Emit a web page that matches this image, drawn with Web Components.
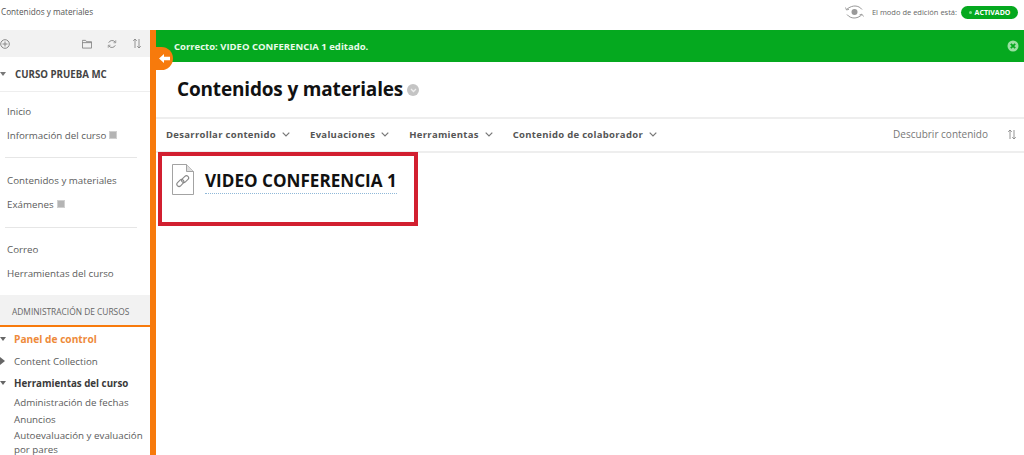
<!DOCTYPE html>
<html lang="es"><head><meta charset="utf-8"><title>Contenidos y materiales</title>
<style>
html,body{margin:0;padding:0;height:455px;overflow:hidden;background:#fff;font-family:"Open Sans","Liberation Sans",sans-serif;}
</style></head><body>
<app-shell></app-shell>
<script>
function def(name,html,init){customElements.define(name,class extends HTMLElement{constructor(){super();this.attachShadow({mode:'open'}).innerHTML=html;}connectedCallback(){init&&init(this);}});}
const chev='<svg width="8" height="5" viewBox="0 0 8 5" fill="none" stroke="#777" stroke-width="1.200"><path d="M.7.700L4 4 7.300.700"/></svg>';
const sortI='<svg width="10" height="11" viewBox="0 0 10 11" fill="none" stroke="#888" stroke-width=".9"><path d="M3 10V1M1.200 2.800L3 1l1.800 1.800M7 1v9M5.200 8.200L7 10l1.800-1.800"/></svg>';

def('top-bar',`<style>:host{display:flex;align-items:center;height:30px;font-size:8.200px;color:#555;background:#fff}
.crumb{padding-left:1px;flex:1;position:relative;top:-4px}
.mode{display:flex;align-items:center;font-size:7.500px;color:#666;padding-right:6px;position:relative;top:-3px}
svg{margin-right:8px}
.pill{margin-left:4px;height:13px;width:57px;box-sizing:border-box;border-radius:7px;background:#05a91f;color:#fff;font-weight:700;font-size:7px;display:flex;align-items:center;justify-content:center;gap:3px}
.dot{width:3px;height:3px;border-radius:50%;background:#7fe08a}
</style><div class="crumb">Contenidos y materiales</div>
<div class="mode"><svg width="19" height="14" viewBox="0 0 19 14" fill="none" stroke="#999" stroke-width="1"><path d="M1.500 4.500C5 1.500 8 1 10 1c3 0 5.500 1.500 7 3.500"/><path d="M2 9.500C3.800 11.800 6.500 13 9 13c2.500 0 5.500-.8 8-3.500"/><path d="M.5 2.500l1 2.500 2.500-.7M18.500 11.500l-1.500-2.300-2.500.7" stroke-width=".9"/><circle cx="9.500" cy="7" r="3" fill="#999" stroke="none"/></svg>El modo de edición está:<span class="pill"><i class="dot"></i>ACTIVADO</span></div>`);

def('side-tools',`<style>:host{display:flex;align-items:center;height:27px;background:#f2f2f2;padding:0 8px 0 0;box-sizing:border-box}
.l{flex:1;display:flex}.r{display:flex;gap:15px;align-items:center}svg{display:block}</style>
<div class="l"><svg width="10" height="10" viewBox="0 0 10 10" fill="none" stroke="#888"><circle cx="5" cy="5" r="4.300"/><path d="M5 2.500v5M2.500 5h5"/></svg></div>
<div class="r"><svg width="10" height="10" viewBox="0 0 11 10" fill="none" stroke="#888"><path d="M.5 2.500V1h3.500l1 1.500h5.500v7H.5z"/><path d="M.5 3.500h10"/></svg>
<svg width="10" height="10" viewBox="0 0 12 12" fill="none" stroke="#888" stroke-width="1.100"><path d="M2 4.500A4.500 4.500 0 0 1 10 4M10 7.500A4.500 4.500 0 0 1 2 8"/><path d="M10.500 1.500V4.500H7.800M1.500 10.500V7.500H4.200" stroke-width=".9"/></svg>
${sortI}</div>`);

def('course-head',`<style>:host{display:flex;align-items:center;height:34px;border-bottom:1px solid #eee;font-size:9.700px;font-weight:700;color:#444}
i{width:0;height:0;border:3.500px solid transparent;border-top:4px solid #777;border-bottom:0;margin:0 9px 0 0}
</style><i></i><slot></slot>`);

def('nav-item',`<style>:host{display:flex;align-items:center;height:24px;padding-left:7px;font-size:9.750px;color:#5c5c5c;white-space:nowrap}
.b{display:none;width:8px;height:8px;background:#b4b4b4;border:1px solid #d0d0d0;box-sizing:border-box;margin-left:3px}
:host([badge]) .b{display:block}</style><slot></slot><span class="b"></span>`);

def('nav-group',`<style>:host{display:block;padding:var(--pt) 0 var(--pb);border-bottom:1px solid #e6e6e6;margin-right:13px;margin-left:5px}
:host([last]){border:0}::slotted(*){margin-left:-5px}</style><slot></slot>`);

def('admin-head',`<style>:host{display:flex;align-items:center;height:30px;background:#f2f2f2;border-bottom:2px solid #f77a0c;padding:3px 0 0 12px;box-sizing:content-box;font-size:8.400px;color:#666;white-space:nowrap}</style><slot></slot>`);

def('tree-item',`<style>:host{display:flex;align-items:center;height:22px;font-size:9.750px;color:#5c5c5c;padding-left:14px;position:relative;white-space:nowrap}
:host([bold]){font-weight:700;color:#3a3a3a}
:host([hot]){color:#ee8a3a;font-weight:700;font-size:10.200px}
i{position:absolute;left:0;top:50%;margin-top:-2px}
:host([open]) i{border:3.500px solid transparent;border-top:4px solid #666;border-bottom:0}
:host([closed]) i{margin-top:-4px;border:4px solid transparent;border-left:5px solid #666;border-right:0}
</style><i></i><slot></slot>`);

def('tree-link',`<style>:host{display:block;padding-left:14px;font-size:9.750px;line-height:14px;color:#5c5c5c;margin-bottom:2.500px;padding-right:4px}</style><slot></slot>`);

def('side-bar',`<style>:host{display:block;width:150px;flex:none;overflow:hidden;background:#fff}
admin-head{height:27px}</style>
<side-tools></side-tools>
<course-head>CURSO PRUEBA MC</course-head>
<nav-group style="--pt:7px;--pb:10px"><nav-item>Inicio</nav-item><nav-item badge>Información del curso</nav-item></nav-group>
<nav-group style="--pt:10px;--pb:11px"><nav-item>Contenidos y materiales</nav-item><nav-item badge>Exámenes</nav-item></nav-group>
<nav-group last style="--pt:9px;--pb:10px"><nav-item>Correo</nav-item><nav-item>Herramientas del curso</nav-item></nav-group>
<admin-head>ADMINISTRACIÓN DE CURSOS</admin-head>
<div style="height:1px"></div>
<tree-item open hot>Panel de control</tree-item>
<tree-item closed>Content Collection</tree-item>
<tree-item open bold>Herramientas del curso</tree-item>
<div style="margin-top:2px"></div>
<tree-link>Administración de fechas</tree-link>
<tree-link>Anuncios</tree-link>
<tree-link>Autoevaluación y evaluación por pares</tree-link>`);

def('success-bar',`<style>:host{display:flex;align-items:center;height:32px;background:#05a91f;color:#e9fbe9;font-size:9.500px;font-weight:700;padding:0 5px 0 18px;box-sizing:border-box}
span{flex:1}svg{display:block}</style><span><slot></slot></span>
<svg width="12" height="12" viewBox="0 0 12 12"><circle cx="6" cy="6" r="5.500" fill="#9adfa2"/><path d="M3.800 3.800l4.400 4.400M8.200 3.800l-4.400 4.400" stroke="#05a91f" stroke-width="1.800"/></svg>`);

def('page-title',`<style>:host{display:flex;align-items:center;height:55px;padding:0 0 2px 21px;font-size:19px;font-weight:700;color:#111;gap:4px;box-sizing:border-box;letter-spacing:-.17px}
i{width:12px;height:12px;border-radius:50%;background:#c4c4c4;display:flex;align-items:center;justify-content:center;margin-top:3px}</style>
<slot></slot><i><svg width="7" height="5" viewBox="0 0 7 5" fill="none" stroke="#eee" stroke-width="1.300"><path d="M1 1l2.500 2.500L6 1"/></svg></i>`);

def('action-menu',`<style>:host{display:inline-flex;align-items:center;gap:6px;font-size:9.500px;font-weight:700;color:#555;letter-spacing:.3px;white-space:nowrap}svg{display:block}</style><slot></slot>${chev}`);

def('action-bar',`<style>:host{display:flex;align-items:center;height:36px;border-top:2px solid #eee;border-bottom:2px solid #eee;box-sizing:border-box;padding:0 7px 2px 10px;gap:20px}
.sp{flex:1}.d{font-size:10px;color:#777;margin-right:-1px}svg{display:block}</style>
<action-menu>Desarrollar contenido</action-menu><action-menu>Evaluaciones</action-menu><action-menu>Herramientas</action-menu><action-menu>Contenido de colaborador</action-menu>
<span class="sp"></span><span class="d">Descubrir contenido</span>${sortI}`);

def('content-item',`<style>:host{display:flex;width:260px;height:74px;box-sizing:border-box;border:4px solid #d21f30;margin:-1px 0 0 2px;padding:8px 0 0 10px;gap:11px;background:#fff}
.t{font-size:17.100px;font-weight:700;color:#111;height:26px;line-height:28px;border-bottom:1px dotted #8fb8d8;margin-top:3px;white-space:nowrap;align-self:flex-start}
svg{display:block;flex:none}</style>
<svg width="22" height="31" viewBox="0 0 22 31" fill="none" stroke="#999" stroke-width=".9"><path d="M.5.500h14l7 7v23H.5z" fill="#fff"/><path d="M14.500.500v7h7" fill="#ddd"/><g stroke="#888" stroke-width="1.100"><rect x="-2.300" y="-2" width="8" height="4.400" rx="2.200" transform="translate(7 20) rotate(-45)"/><rect x="-4" y="-2" width="8" height="4.400" rx="2.200" transform="translate(13 15) rotate(-45)"/></g></svg>
<div class="t"><slot></slot></div>`);

def('collapse-tab',`<style>:host{position:absolute;left:0;top:17px;width:17px;height:23px;background:#f77a0c;border-radius:0 12px 12px 0;display:flex;align-items:center;justify-content:center}svg{display:block}</style>
<svg width="11" height="9" viewBox="0 0 11 9" fill="#fff"><path d="M0 4.500L5 0v2.700h6v3.600H5V9z"/></svg>`);

def('main-pane',`<style>:host{display:block;flex:1;min-width:0;border-left:6px solid #f77a0c;position:relative}</style>
<success-bar>Correcto: VIDEO CONFERENCIA 1 editado.</success-bar>
<collapse-tab></collapse-tab>
<page-title>Contenidos y materiales</page-title>
<action-bar></action-bar>
<content-item>VIDEO CONFERENCIA 1</content-item>`);

def('app-shell',`<style>:host{display:block;height:455px;overflow:hidden}.row{display:flex;height:425px;overflow:hidden}</style>
<top-bar></top-bar><div class="row"><side-bar></side-bar><main-pane></main-pane></div>`);
</script></body></html>
